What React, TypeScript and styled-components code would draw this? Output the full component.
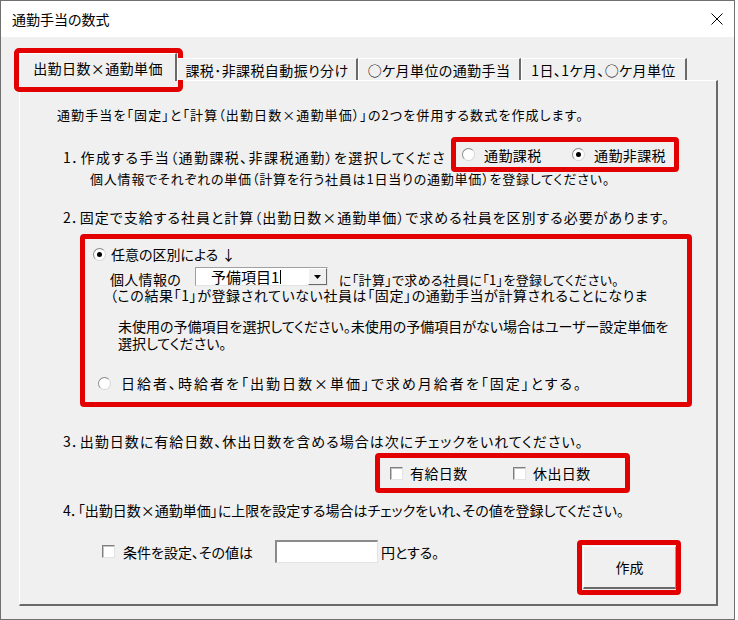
import styled, { createGlobalStyle } from 'styled-components';

const GlobalStyle = createGlobalStyle`
  html, body {
    margin: 0;
    padding: 0;
    background: #ffffff;
  }
  body {
    font-family: "Noto Sans CJK JP", "Noto Sans", sans-serif;
    color: #000;
  }
`;

const RED = '#e20000';

const Window = styled.div`
  box-sizing: border-box;
  width: 735px;
  height: 620px;
  border: 1px solid #707070;
  background: #f0f0f0;
  display: flex;
  flex-direction: column;
  font-family: "Noto Sans CJK JP", "Noto Sans", sans-serif;
  font-feature-settings: "palt";
`;

const TitleBar = styled.div`
  height: 36px;
  flex: none;
  background: #fff;
  display: flex;
  align-items: center;
  justify-content: space-between;
  padding: 0 11px 0 11px;
  font-size: 14px;
`;

const Body = styled.div`
  flex: 1;
  display: flex;
  flex-direction: column;
  padding: 16px 0 0 18px;
`;

const TabStrip = styled.div`
  display: flex;
  align-items: flex-end;
  height: 27px;
  margin-left: 1px;
`;

const Tab = styled.div<{ $active?: boolean; $w: number }>`
  position: relative;
  box-sizing: border-box;
  width: ${p => p.$w}px;
  height: ${p => (p.$active ? 28 : 22)}px;
  margin-bottom: ${p => (p.$active ? -1 : 0)}px;
  border-top: 1px solid #fff;
  border-left: 1px solid #fff;
  border-right: 2px solid #6a6a6a;
  background: #f0f0f0;
  display: flex;
  align-items: center;
  justify-content: center;
  font-size: 14px;
  letter-spacing: 0.4px;
  white-space: nowrap;
  ${p =>
    p.$active &&
    `
    &::after {
      content: '';
      position: absolute;
      top: -6px;
      left: -7px;
      right: -8px;
      bottom: -11px;
      border: 5px solid ${RED};
      border-radius: 5px;
    }
  `}
`;

const Panel = styled.div`
  box-sizing: border-box;
  width: 699px;
  height: 526px;
  border-top: 1px solid #fff;
  border-left: 1px solid #fff;
  border-right: 2px solid #6a6a6a;
  border-bottom: 2px solid #6a6a6a;
  display: flex;
  flex-direction: column;
`;

const IntroText = styled.div`
  margin: 24px 0 0 37px;
  font-size: 13px;
  line-height: 20px;
  letter-spacing: 1.1px;
  white-space: nowrap;
`;

const Question = styled.div<{ $top: number; $ls: number }>`
  margin: ${p => p.$top}px 0 0 43px;
  font-size: 14px;
  line-height: 20px;
  letter-spacing: ${p => p.$ls}px;
  white-space: nowrap;
`;

const QuestionRow = styled.div`
  display: flex;
  align-items: center;
  height: 35px;
  margin: 12px 0 0 43px;
`;

const ClippedLabel = styled.div`
  width: 388px;
  overflow: hidden;
  font-size: 14px;
  line-height: 20px;
  letter-spacing: 1.4px;
  white-space: nowrap;
  padding-top: 4px;
`;

const Note = styled.div`
  margin-left: 70px;
  font-size: 13px;
  line-height: 14px;
  letter-spacing: 0.8px;
  white-space: nowrap;
`;

const Highlight = styled.div`
  box-sizing: border-box;
  border: 5px solid ${RED};
  border-radius: 4px;
  flex: none;
`;

const RadioGroupBox = styled(Highlight)`
  width: 228px;
  height: 35px;
  display: flex;
  align-items: center;
  padding-left: 6px;
`;

const SelectBox = styled(Highlight)`
  width: 612px;
  height: 173px;
  margin: 7px 0 0 60px;
  display: flex;
  flex-direction: column;
  padding-top: 5px;
`;

const CheckGroupBox = styled(Highlight)`
  width: 255px;
  height: 40px;
  margin: 2px 0 0 355px;
  display: flex;
  align-items: center;
  padding-left: 10px;
`;

const Option = styled.label<{ $w?: number; $gap: number; $ls?: number }>`
  display: flex;
  align-items: center;
  gap: ${p => p.$gap}px;
  width: ${p => (p.$w ? `${p.$w}px` : 'auto')};
  flex: none;
  font-size: 14px;
  line-height: 20px;
  letter-spacing: ${p => p.$ls ?? 0.4}px;
  white-space: nowrap;
`;

const Radio = styled.span<{ $checked?: boolean }>`
  box-sizing: border-box;
  width: 13px;
  height: 13px;
  flex: none;
  border-radius: 50%;
  border: 1px solid;
  border-color: #8a8a8a #d6d6d6 #d6d6d6 #8a8a8a;
  background: #fff;
  display: flex;
  align-items: center;
  justify-content: center;

  &::after {
    content: '';
    width: 5px;
    height: 5px;
    border-radius: 50%;
    background: ${p => (p.$checked ? '#000' : 'transparent')};
  }
`;

const Checkbox = styled.span`
  box-sizing: border-box;
  width: 13px;
  height: 13px;
  flex: none;
  background: #fff;
  border-top: 1px solid #7f7f7f;
  border-left: 1px solid #7f7f7f;
  border-right: 1px solid #e3e3e3;
  border-bottom: 1px solid #e3e3e3;
  box-shadow: inset 1px 1px 0 #c4c4c4;
`;

const BoxRow = styled.div<{ $top: number; $indent: number }>`
  display: flex;
  align-items: flex-end;
  margin: ${p => p.$top}px 0 0 ${p => p.$indent}px;
  font-size: 14px;
  white-space: nowrap;
`;

const BoxText = styled.div<{ $top: number; $indent: number; $lh: number; $ls: number }>`
  margin: ${p => p.$top}px 0 0 ${p => p.$indent}px;
  font-size: 14px;
  line-height: ${p => p.$lh}px;
  letter-spacing: ${p => p.$ls}px;
  white-space: nowrap;
`;

const InlineLabel = styled.span<{ $size: number }>`
  font-size: ${p => p.$size}px;
  line-height: 13px;
  letter-spacing: 0.3px;
`;

const Combo = styled.div`
  box-sizing: border-box;
  width: 133px;
  height: 19px;
  margin: 0 11px 0 14px;
  display: flex;
  background: #fff;
  border-top: 1px solid #a0a0a0;
  border-left: 1px solid #a0a0a0;
  border-right: 1px solid #e3e3e3;
  border-bottom: 1px solid #e3e3e3;
`;

const ComboText = styled.div`
  flex: 1;
  display: flex;
  align-items: center;
  padding-left: 15px;
  font-size: 15px;
  line-height: 17px;
`;

const Caret = styled.span`
  display: inline-block;
  width: 1px;
  height: 14px;
  margin-left: 1px;
  background: #000;
`;

const DropButton = styled.div`
  box-sizing: border-box;
  width: 19px;
  height: 17px;
  background: #f0f0f0;
  border-top: 1px solid #fff;
  border-left: 1px solid #fff;
  border-right: 1px solid #696969;
  border-bottom: 1px solid #696969;
  display: flex;
  align-items: center;
  justify-content: center;
`;

const BottomRow = styled.div`
  display: flex;
  justify-content: space-between;
  align-items: flex-start;
  margin-top: 20px;
  padding: 0 35px 0 82px;
`;

const LimitGroup = styled.div`
  display: flex;
  align-items: center;
  height: 23px;
  font-size: 14px;
  white-space: nowrap;
`;

const LimitLabel = styled.span`
  width: 152px;
  margin-left: 8px;
`;

const ValueInput = styled.div`
  box-sizing: border-box;
  width: 103px;
  height: 23px;
  background: #fff;
  border-top: 2px solid #8a8a8a;
  border-left: 2px solid #8a8a8a;
  border-right: 1px solid #e3e3e3;
  border-bottom: 1px solid #e3e3e3;
  margin-right: 3px;
`;

const ButtonBox = styled(Highlight)`
  width: 104px;
  height: 55px;
  padding: 1px 0 0 1px;
`;

const Button = styled.div`
  box-sizing: border-box;
  width: 93px;
  height: 43px;
  background: #f0f0f0;
  border-top: 1px solid #fff;
  border-left: 1px solid #fff;
  border-right: 1px solid #a0a0a0;
  border-bottom: 2px solid #696969;
  display: flex;
  align-items: center;
  justify-content: center;
  font-size: 14px;
`;

function App() {
  return (
    <>
      <GlobalStyle />
      <Window>
        <TitleBar>
          <span>通勤手当の数式</span>
          <svg width="12" height="12" viewBox="0 0 12 12">
            <path d="M0.5 0.5 L11.5 11.5 M11.5 0.5 L0.5 11.5" stroke="#000" strokeWidth="1" />
          </svg>
        </TitleBar>
        <Body>
          <TabStrip>
            <Tab $active $w={157}>出勤日数×通勤単価</Tab>
            <Tab $w={181}>課税･非課税自動振り分け</Tab>
            <Tab $w={163}>○ケ月単位の通勤手当</Tab>
            <Tab $w={166}>1日、1ケ月、○ケ月単位</Tab>
          </TabStrip>
          <Panel>
            <IntroText>通勤手当を「固定」と「計算（出勤日数×通勤単価）」の2つを併用する数式を作成します。</IntroText>

            <QuestionRow>
              <ClippedLabel>1．作成する手当（通勤課税、非課税通勤）を選択してくださ</ClippedLabel>
              <RadioGroupBox>
                <Option $w={110} $gap={9}>
                  <Radio />
                  通勤課税
                </Option>
                <Option $gap={9}>
                  <Radio $checked />
                  通勤非課税
                </Option>
              </RadioGroupBox>
            </QuestionRow>
            <Note>個人情報でそれぞれの単価（計算を行う社員は1日当りの通勤単価）を登録してください。</Note>

            <Question $top={21} $ls={1}>
              2．固定で支給する社員と計算（出勤日数×通勤単価）で求める社員を区別する必要があります。
            </Question>
            <SelectBox>
              <BoxRow $top={0} $indent={8}>
                <Option $gap={5} $ls={0}>
                  <Radio $checked />
                  任意の区別による ↓
                </Option>
              </BoxRow>
              <BoxRow $top={3} $indent={25}>
                <InlineLabel $size={14}>個人情報の</InlineLabel>
                <Combo>
                  <ComboText>
                    予備項目1<Caret />
                  </ComboText>
                  <DropButton>
                    <svg width="7" height="4" viewBox="0 0 7 4">
                      <path d="M0 0 H7 L3.5 4 Z" fill="#000" />
                    </svg>
                  </DropButton>
                </Combo>
                <InlineLabel $size={13}>に「計算」で求める社員に「1」を登録してください。</InlineLabel>
              </BoxRow>
              <BoxText $top={3} $indent={25} $lh={13} $ls={0.6}>
                （この結果「1」が登録されていない社員は「固定」の通勤手当が計算されることになりま
              </BoxText>
              <BoxText $top={16} $indent={33} $lh={17} $ls={0}>
                未使用の予備項目を選択してください。未使用の予備項目がない場合はユーザー設定単価を
                <br />
                選択してください。
              </BoxText>
              <BoxRow $top={21} $indent={13}>
                <Option $gap={10} $ls={2}>
                  <Radio />
                  日給者、時給者を「出勤日数×単価」で求め月給者を「固定」とする。
                </Option>
              </BoxRow>
            </SelectBox>

            <Question $top={24} $ls={1}>
              3．出勤日数に有給日数、休出日数を含める場合は次にチェックをいれてください。
            </Question>
            <CheckGroupBox>
              <Option $w={123} $gap={7}>
                <Checkbox />
                有給日数
              </Option>
              <Option $gap={7}>
                <Checkbox />
                休出日数
              </Option>
            </CheckGroupBox>

            <Question $top={7} $ls={0}>
              4．「出勤日数×通勤単価」に上限を設定する場合はチェックをいれ、その値を登録してください。
            </Question>
            <BottomRow>
              <LimitGroup>
                <Checkbox />
                <LimitLabel>条件を設定、その値は</LimitLabel>
                <ValueInput />
                円とする。
              </LimitGroup>
              <ButtonBox>
                <Button>作成</Button>
              </ButtonBox>
            </BottomRow>
          </Panel>
        </Body>
      </Window>
    </>
  );
}

export default App;
